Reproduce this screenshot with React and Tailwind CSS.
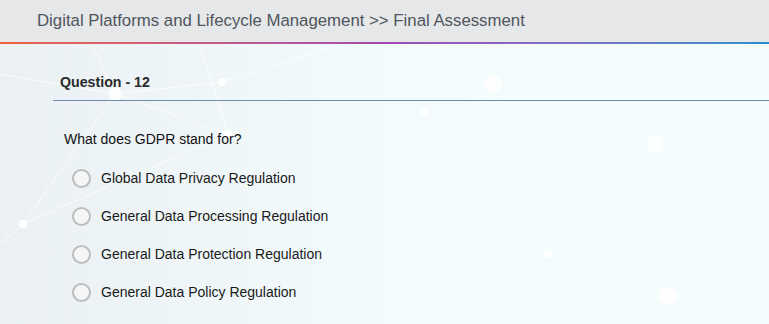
import React from "react";

const options = [
  "Global Data Privacy Regulation",
  "General Data Processing Regulation",
  "General Data Protection Regulation",
  "General Data Policy Regulation",
];

const Backdrop = () => (
  <svg
    className="absolute inset-0 h-full w-full"
    viewBox="0 0 769 280"
    preserveAspectRatio="none"
  >
    <g stroke="#ffffff" strokeWidth="1" opacity="0.8" fill="none">
      <path d="M0 30 L115 50 L222 38 L340 0" />
      <path d="M115 50 L23 180 L0 200" />
      <path d="M115 50 L228 90 L200 0" />
      <path d="M23 180 L228 90" />
      <path d="M92 0 L115 50" />
      <path d="M548 110 L667 252 L769 220" />
      <path d="M662 130 L667 252" />
      <path d="M440 10 L548 110" />
    </g>
    <g fill="#ffffff">
      <circle cx="115" cy="50" r="7" opacity="0.8" />
      <circle cx="222" cy="38" r="4" />
      <circle cx="23" cy="180" r="4" />
      <circle cx="228" cy="90" r="4" />
      <circle cx="493" cy="40" r="9" opacity="0.8" />
      <circle cx="655" cy="100" r="9" opacity="0.8" />
      <circle cx="548" cy="210" r="4" />
      <circle cx="667" cy="252" r="9" />
      <circle cx="425" cy="68" r="4" />
    </g>
  </svg>
);

export default function App() {
  return (
    <div
      className="w-[769px] h-[324px] overflow-hidden flex flex-col"
      style={{ fontFamily: '"Liberation Sans", Arial, sans-serif' }}
    >
      <div className="h-[42px] shrink-0 bg-[#e6e7e8] flex items-center pl-[37px] text-[16.8px] text-[#4f555c]">
        Digital Platforms and Lifecycle Management &gt;&gt; Final Assessment
      </div>
      <div className="h-[2px] shrink-0 bg-gradient-to-r from-[#ef6140] via-[#a04cb0] to-[#1f8fcf]" />
      <div className="relative flex-1 bg-gradient-to-r from-[#eaf0f3] via-[#f4fbfc] to-[#f4fdfd]">
        <Backdrop />
        <div className="relative flex flex-col">
          <div className="ml-[53px] pt-[28px] pb-[7px] pl-[7px] border-b-[1.5px] border-[#6b8bb5] text-[14.2px] font-bold text-[#2a2a2a]">
            Question - 12
          </div>
          <div className="pl-[64px] pt-[28px] text-[14px] text-[#111]">
            What does GDPR stand for?
          </div>
          <div className="flex flex-col gap-[18px] pt-[18px] pl-[72px]">
            {options.map((o) => (
              <label key={o} className="flex items-center gap-[10px] text-[14px] text-[#1a1a1a] h-[20px]">
                <span className="w-[19px] h-[19px] rounded-full border-2 border-[#bdbdbd] bg-[#f4f6f7]" />
                {o}
              </label>
            ))}
          </div>
        </div>
      </div>
    </div>
  );
}
